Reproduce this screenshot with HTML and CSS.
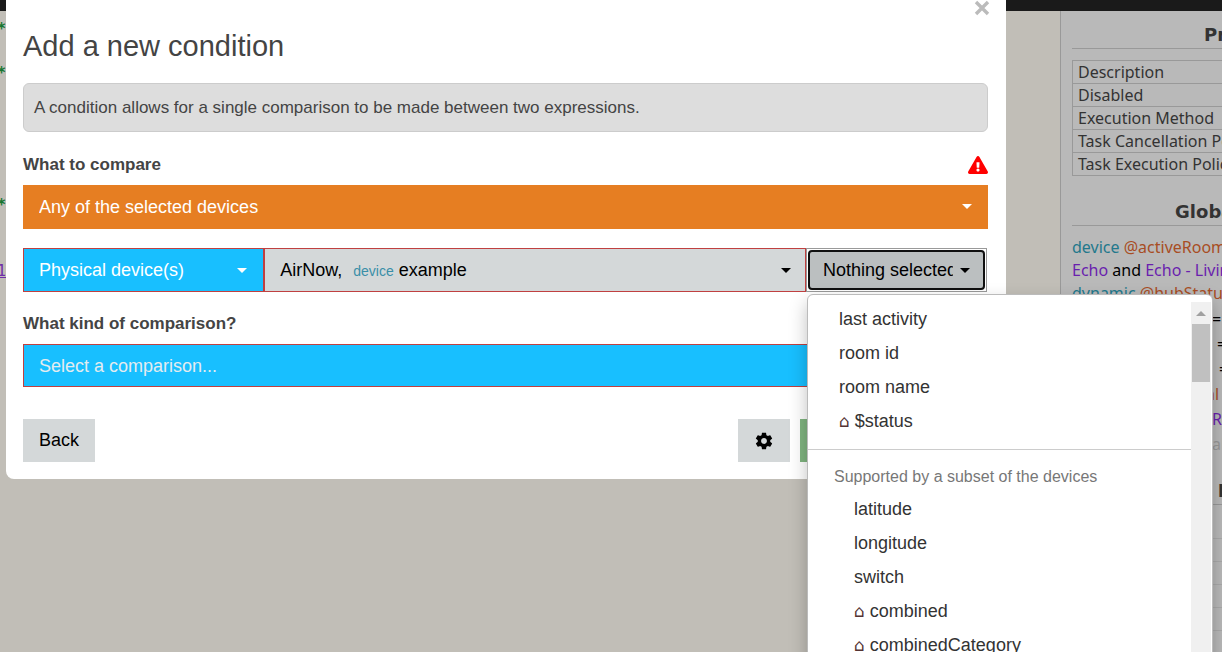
FILE: index.html
```html
<!DOCTYPE html>
<html lang="en">
<head>
    <meta charset="UTF-8">
    <meta name="viewport" content="width=device-width, initial-scale=1.0">
    <title>Add a new condition</title>
    <link rel="stylesheet" href="styles.css">
</head>
<body>
    <header class="topbar"></header>
    <div class="page">
        <div class="code">
            <div class="comment">*</div>
            <div></div>
            <div class="comment">*</div>
            <div></div>
            <div></div>
            <div></div>
            <div></div>
            <div></div>
            <div class="comment">*</div>
            <div></div>
            <div></div>
            <div class="device-link">1</div>
        </div>
        <aside class="sidebar">
            <div class="sidebar-inner">
                <h4>Properties</h4>
                <table class="props">
                    <tr><td>Description</td></tr>
                    <tr><td>Disabled</td></tr>
                    <tr><td>Execution Method</td></tr>
                    <tr><td>Task Cancellation Policy</td></tr>
                    <tr><td>Task Execution Policy</td></tr>
                </table>
                <h4>Global variables</h4>
                <div class="vars">
                    <div><span class="type">device</span> <span class="name">@activeRooms</span></div>
                    <div><span class="device">Echo</span> and <span class="device">Echo - Living</span></div>
                    <div><span class="type">dynamic</span> <span class="name">@hubStatus</span></div>
                </div>
                <div class="values">
                    <div class="short">=</div>
                    <div class="medium">=</div>
                    <div class="long">=</div>
                    <div class="tail name">al</div>
                    <div class="short device">R</div>
                    <div class="short muted">al</div>
                </div>
                <h4 class="local-title">Devices</h4>
                <div class="rows">
                    <div></div>
                    <div></div>
                    <div></div>
                    <div></div>
                    <div></div>
                </div>
            </div>
        </aside>
    </div>

    <form class="modal" role="dialog" aria-labelledby="title">
        <button type="button" class="close" aria-label="Close">
            <svg width="16" height="16" viewBox="0 0 16 16"><path d="M2 2 14 14M14 2 2 14" stroke="currentColor" stroke-width="3.4"/></svg>
        </button>
        <h1 id="title">Add a new condition</h1>
        <p class="well">A condition allows for a single comparison to be made between two expressions.</p>

        <div class="label-row">
            <label for="quantifier">What to compare</label>
            <svg class="warning" width="20" height="18" viewBox="0 0 576 512"><path fill="red" d="M569.5 440c18.500 32-4.700 72-41.600 72H48.100c-36.900 0-60-40.100-41.600-72L246.400 24c18.500-32 64.700-32 83.200 0l239.900 416zM288 354c-25.400 0-46 20.600-46 46s20.600 46 46 46 46-20.600 46-46-20.600-46-46-46zm-43.700-165.300l7.400 136c.4 6.400 5.600 11.300 12 11.300h48.600c6.400 0 11.600-5 12-11.300l7.400-136c.4-6.900-5.100-12.700-12-12.700h-63.400c-6.900 0-12.400 5.800-12 12.700z"/></svg>
        </div>
        <div class="picker orange">
            <select id="quantifier"><option>Any of the selected devices</option></select>
        </div>

        <div class="operand">
            <div class="picker blue invalid">
                <select aria-label="Operand type"><option>Physical device(s)</option></select>
            </div>
            <button type="button" class="picker devices invalid" aria-haspopup="listbox">AirNow, <small>device</small> example</button>
            <div class="attribute">
                <button type="button" class="picker open" aria-haspopup="listbox" aria-expanded="true"><span>Nothing selected</span></button>
                <div class="menu">
                    <ul role="listbox" aria-label="Attribute">
                        <li role="option">last activity</li>
                        <li role="option">room id</li>
                        <li role="option">room name</li>
                        <li role="option"><i>⌂</i> $status</li>
                        <li class="divider" role="presentation"></li>
                        <li class="group" role="presentation">Supported by a subset of the devices</li>
                        <li class="sub" role="option">latitude</li>
                        <li class="sub" role="option">longitude</li>
                        <li class="sub" role="option">switch</li>
                        <li class="sub" role="option"><i>⌂</i> combined</li>
                        <li class="sub" role="option"><i>⌂</i> combinedCategory</li>
                    </ul>
                    <div class="scrollbar">
                        <div class="arrow"></div>
                        <div class="thumb"></div>
                    </div>
                </div>
            </div>
        </div>

        <div class="label-row">
            <label for="comparison">What kind of comparison?</label>
        </div>
        <div class="picker blue invalid comparison">
            <select id="comparison"><option>Select a comparison...</option></select>
        </div>

        <div class="footer">
            <button type="button" class="btn">Back</button>
            <button type="button" class="btn settings" aria-label="Settings">
                <svg width="20" height="20" viewBox="0 0 24 24"><path d="M19.430 12.980c.04-.32.07-.64.07-.98s-.03-.66-.07-.98l2.110-1.650c.19-.15.24-.42.12-.64l-2-3.460c-.12-.22-.39-.3-.61-.22l-2.490 1c-.52-.4-1.080-.73-1.690-.98l-.38-2.650C14.460 2.180 14.250 2 14 2h-4c-.25 0-.46.18-.49.42l-.38 2.650c-.61.25-1.170.59-1.690.98l-2.490-1c-.23-.09-.49 0-.61.22l-2 3.460c-.13.22-.07.49.12.64l2.110 1.650c-.04.32-.07.65-.07.98s.03.66.07.98l-2.110 1.650c-.19.15-.24.42-.12.64l2 3.460c.12.22.39.3.61.22l2.490-1c.52.4 1.080.73 1.690.98l.38 2.650c.03.24.24.42.49.42h4c.25 0 .46-.18.49-.42l.38-2.650c.61-.25 1.170-.59 1.690-.98l2.490 1c.23.09.49 0 .61-.22l2-3.460c.12-.22.07-.49-.12-.64l-2.110-1.650zM12 15.500c-1.930 0-3.500-1.570-3.500-3.500s1.570-3.500 3.500-3.500 3.500 1.570 3.500 3.500-1.570 3.500-3.500 3.500z"/></svg>
            </button>
            <button type="button" class="btn add">Add</button>
        </div>
    </form>
</body>
</html>
```
FILE: styles.css
```css
* {
    box-sizing: border-box;
}

body {
    margin: 0;
    height: 100vh;
    overflow: hidden;
    display: flex;
    flex-direction: column;
    background: #c1beb7;
    font-family: "Liberation Sans", Arial, sans-serif;
    font-size: 18px;
    color: #444;
}

button, select {
    font: inherit;
    border: 0;
    border-radius: 0;
    cursor: pointer;
}

.topbar {
    height: 11px;
    background: #1a1a1a;
}

.page {
    flex: 1;
    display: flex;
    min-height: 0;
}

/* piston code, mostly behind the dialog */
.code {
    flex: 1;
    display: grid;
    grid-auto-rows: 22px;
    align-content: start;
    padding-top: 6px;
    font-family: "DejaVu Sans Mono", monospace;
    font-size: 15px;
    line-height: 24px;
    text-indent: -3px;
}

.comment {
    color: #17762f;
    font-weight: bold;
}

.device-link {
    color: #6f2da8;
    text-decoration: underline;
}

.sidebar {
    flex: 0 0 162px;
    overflow: hidden;
    border-left: 1px solid #999;
    background: #b9b9b9;
    font-family: "Noto Sans", sans-serif;
    font-size: 16px;
    line-height: 23px;
    color: #333;
}

.sidebar-inner {
    width: 392px;
    padding: 12px 11px;
}

.sidebar h4 {
    margin: 0 0 10px;
    padding-bottom: 2px;
    border-bottom: 1px solid #999;
    font-family: "DejaVu Sans", sans-serif;
    font-size: 18px;
    line-height: 23px;
    text-align: center;
}

.props {
    width: 100%;
    margin: 11px 0 24px;
    border-collapse: collapse;
}

.props td {
    padding: 0 5px;
    border: 1px solid #999;
    line-height: 22px;
}

.vars {
    color: #000;
    white-space: nowrap;
}

.type {
    color: #23788c;
}

.name {
    color: #a84d24;
}

.device {
    color: #6a1fae;
}

.values {
    padding-top: 2px;
    line-height: 25px;
    color: #000;
}

.short {
    padding-left: 140px;
}

.medium {
    padding-left: 145px;
}

.long {
    padding-left: 147px;
}

.tail {
    padding-left: 134px;
}

.values .name {
    color: #a84d24;
}

.values .device {
    color: #6a1fae;
}

.values .muted {
    color: #999;
}

.sidebar .local-title {
    margin: 22px 0 11px;
}

.rows div {
    height: 23px;
    border-bottom: 1px solid #aaa;
}

.modal {
    position: absolute;
    top: 0;
    left: 6px;
    right: 216px;
    padding: 0 18px 17px 17px;
    border-radius: 0 0 8px 8px;
    background: #fff;
}

.close {
    position: absolute;
    top: 0;
    right: 16px;
    padding: 0;
    background: none;
    color: #bbb;
    line-height: 0;
}

.modal h1 {
    margin: 0;
    padding: 29px 0 20px;
    font-size: 29px;
    line-height: 34px;
    font-weight: normal;
}

.well {
    margin: 0 0 21px;
    padding: 12px 10px;
    border: 1px solid #ccc;
    border-radius: 6px;
    background: #ddd;
    font-size: 17px;
    line-height: 23px;
}

.label-row {
    display: flex;
    justify-content: space-between;
    align-items: center;
    margin-bottom: 8px;
    font-size: 17px;
    line-height: 24px;
    font-weight: bold;
}

.picker {
    position: relative;
    display: block;
    width: 100%;
    height: 44px;
    padding: 0;
    text-align: left;
}

.picker select {
    display: block;
    width: 100%;
    height: 100%;
    padding: 0 40px 0 16px;
    appearance: none;
    background: none;
    color: inherit;
}

.picker::after {
    content: "";
    position: absolute;
    top: 19px;
    right: 16px;
    border: 5px solid transparent;
    border-top-color: currentColor;
    border-bottom: 0;
}

.orange {
    background: #e67e22;
    color: #fff;
}

.blue {
    background: #18bfff;
    color: #fff;
}

.invalid {
    border: 1px solid #c04040;
}

.picker.invalid select {
    padding-left: 15px;
}

.operand {
    display: grid;
    grid-template-columns: 25% 1fr 182px;
    margin: 19px 0 20px;
}

.devices {
    padding: 0 15px;
    background: #d4d8d9;
    color: #000;
}

.devices::after {
    right: 14px;
}

.devices small {
    margin: 0 0 0 6px;
    font-size: 14px;
    color: #3a8fa8;
}

.attribute {
    position: relative;
    margin-right: 1px;
    padding: 1px;
    border: 1px solid #999;
}

.open {
    height: 40px;
    padding: 0 30px 0 13px;
    border: 2px solid #101010;
    border-radius: 4px;
    background: #bbbfc0;
    color: #000;
}

.open::after {
    top: 16px;
    right: 13px;
}

.open span {
    display: block;
    overflow: hidden;
    white-space: nowrap;
}

.menu {
    position: absolute;
    z-index: 1;
    top: 45px;
    left: 0;
    width: 406px;
    display: flex;
    padding: 7px 1px 7px 0;
    border: 1px solid #bbb;
    border-radius: 6px;
    background: #fff;
    box-shadow: 0 8px 18px rgba(0, 0, 0, 0.25);
    color: #333;
}

.menu ul {
    flex: 1;
    margin: 0;
    padding: 0;
    list-style: none;
}

.menu li {
    height: 34px;
    padding-left: 31px;
    line-height: 34px;
}

.menu i {
    font-family: "DejaVu Sans", sans-serif;
    font-size: 17px;
    font-style: normal;
    line-height: 1;
    color: #533;
}

.menu .divider {
    height: 1px;
    margin: 11px 0 10px;
    background: #ccc;
}

.menu .group {
    height: 32px;
    padding-left: 26px;
    font-size: 16px;
    color: #777;
}

.menu .sub {
    padding-left: 46px;
}

.scrollbar {
    width: 20px;
    background: #f0f0f0;
}

.arrow {
    width: 10px;
    margin: 9px auto 8px;
    border: 5px solid transparent;
    border-top: 0;
    border-bottom-color: #a0a0a0;
}

.thumb {
    height: 58px;
    margin: 0 1px;
    background: #c0c0c0;
}

.comparison {
    height: 43px;
    color: #e3ecf0;
}

.footer {
    display: flex;
    gap: 10px;
    margin-top: 32px;
}

.btn {
    height: 43px;
    padding: 0 16px;
    background: #d4d8d9;
    color: #000;
}

.settings {
    margin-left: auto;
    line-height: 0;
}

.add {
    width: 188px;
    background: #80b580;
    color: #fff;
}
```
